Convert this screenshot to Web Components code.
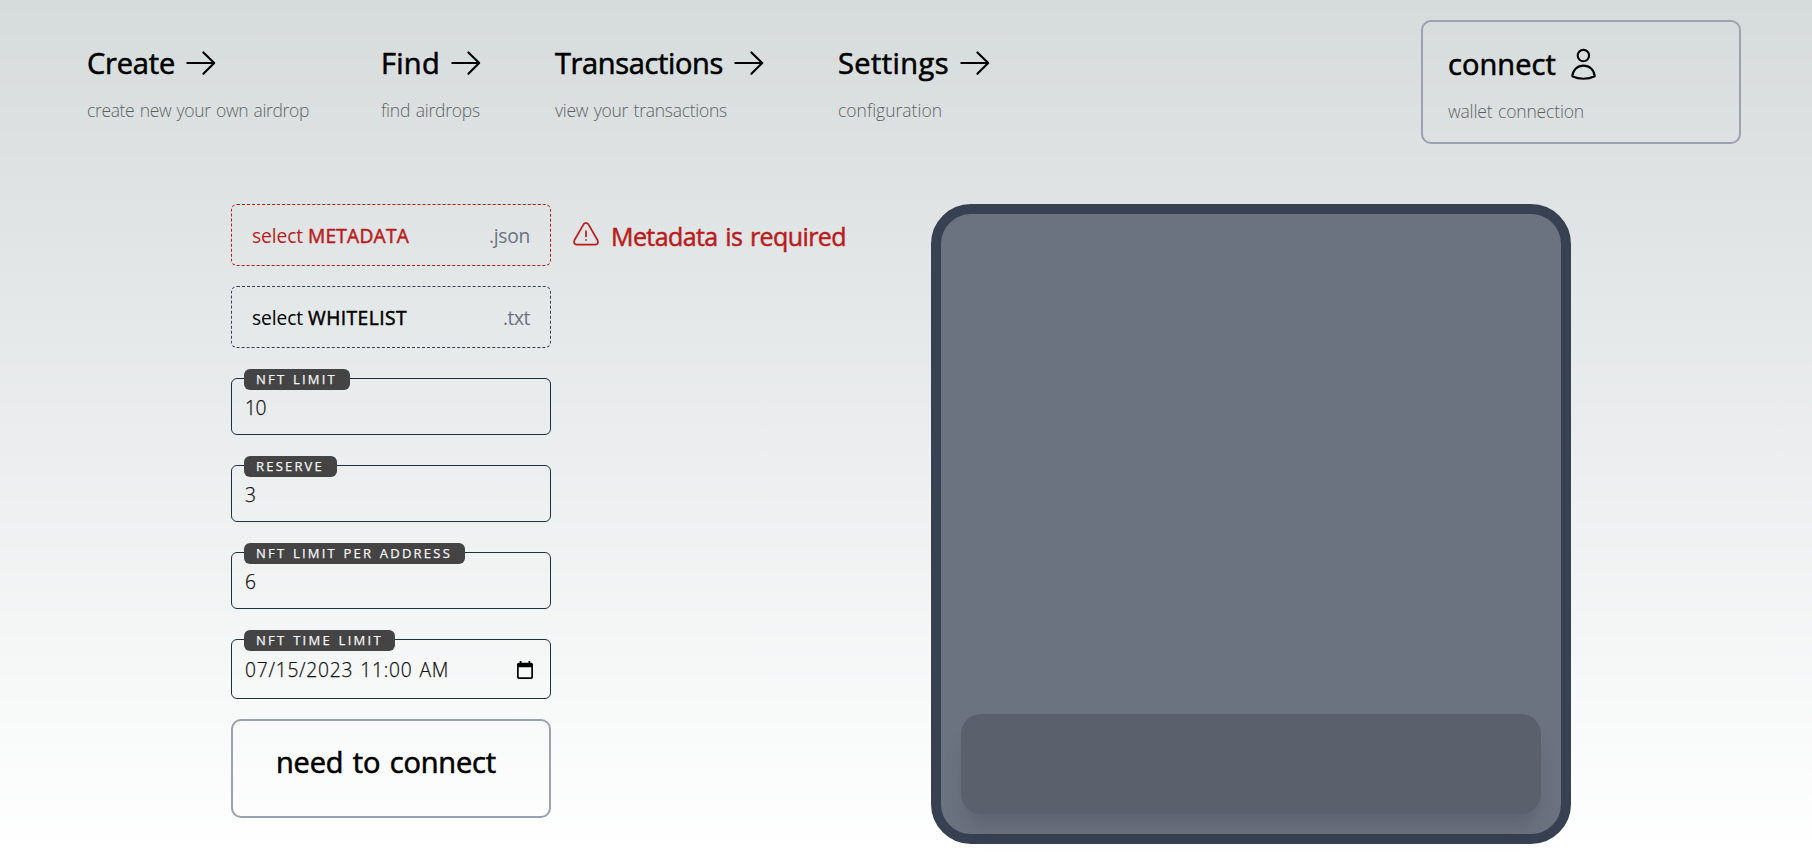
<!DOCTYPE html>
<html lang="en">
<head>
<meta charset="utf-8">
<title>Airdrop</title>
<style>
html,body{margin:0;height:100%;overflow:hidden}
body{background:linear-gradient(rgba(255,255,255,0),#fff) #d6dbdc;font-family:"Open Sans","Noto Sans",sans-serif;color:#000}
</style>
</head>
<body>
<airdrop-page></airdrop-page>
<script>
const define=(name,html,setup)=>customElements.define(name,class extends HTMLElement{
  connectedCallback(){
    if(this.shadowRoot)return;
    this.attachShadow({mode:"open"}).innerHTML=typeof html==="function"?html(this):html;
    if(setup)setup(this);
  }
});

/* Sets one line of text to a given advance width through its tracking. */
define("fit-text",`<style>:host{display:block;white-space:nowrap;width:max-content}span{display:inline-block;word-spacing:.07em}</style><span></span>`,el=>{
  const s=el.shadowRoot.querySelector("span");
  s.textContent=el.getAttribute("text");
  const w=parseFloat(el.getAttribute("w")),n=s.textContent.length;
  s.style.letterSpacing=(w-s.getBoundingClientRect().width)/n+"px";
});

define("arrow-icon",`<style>:host{display:block;width:30px;height:26px}svg{display:block}</style>
<svg width="30" height="26" viewBox="0 0 30 26" fill="none" stroke="#000" stroke-width="2.1" stroke-linecap="round" stroke-linejoin="round"><path d="M1.3 13H28M17.4 2.4 28.2 13 17.4 23.8"/></svg>`);

define("user-icon",`<style>:host{display:block;width:26px;height:32px}svg{display:block}</style>
<svg width="26" height="32" viewBox="0 0 26 32" fill="none" stroke="#000" stroke-width="2.1" stroke-linejoin="round"><circle cx="12.4" cy="7.6" r="5.7"/><path d="M1.3 28.2C1.9 21.800 6.400 17.600 12.500 17.600s10.600 4.200 11.200 10.600C20.300 29.900 16.500 30.700 12.500 30.700S4.700 29.900 1.300 28.200Z"/></svg>`);

define("warning-icon",`<style>:host{display:block;width:26px;height:24px}svg{display:block}</style>
<svg width="26" height="24" viewBox="0 0 26 24" fill="none" stroke="#b91c1c" stroke-width="1.7" stroke-linecap="round" stroke-linejoin="round"><path d="M10.700 2.100Q13 -.4 15.300 2.100L24.600 18.200Q26 22.200 22.200 22.700H3.800Q0 22.200 1.400 18.200Z"/><path d="M13 9.200v5.200M13 17.800v.1"/></svg>`);

define("calendar-icon",`<style>:host{display:block;width:16px;height:18px}svg{display:block}</style>
<svg width="16" height="18" viewBox="0 0 16 18"><path fill="#000" fill-rule="evenodd" d="M2.700 0h1.800v1.800h7V0h1.800v1.800h.9A1.800 1.800 0 0 1 16 3.600V16.200A1.800 1.800 0 0 1 14.200 18H1.800A1.800 1.800 0 0 1 0 16.200V3.600A1.800 1.800 0 0 1 1.800 1.800h.9ZM1.700 6.200V16.300H14.300V6.200Z"/></svg>`);

define("nav-card",el=>`<style>
:host{display:block;box-sizing:border-box}
.row{display:flex;align-items:center;height:40px;gap:${el.getAttribute("gap")||11}px}
.title{font-size:29px;line-height:40px;-webkit-text-stroke:.6px currentColor}
.sub{font-size:17.5px;line-height:24px;font-weight:300;opacity:.58;margin-top:15px}
</style><div class="row"><fit-text class="title" text="${el.getAttribute("name")}" w="${el.getAttribute("w")}"></fit-text><slot></slot></div>
<fit-text class="sub" text="${el.getAttribute("sub")}" w="${el.getAttribute("sw")}"></fit-text>`);

define("file-picker",el=>`<style>
:host{display:flex;box-sizing:border-box;height:62px;border:1px dashed #374151;border-radius:6px;padding:2px 20px 0;align-items:center;font-size:19.2px;line-height:30px;color:#000}
:host([invalid]){border-color:#b91c1c;color:#b91c1c}
.kind{-webkit-text-stroke:.5px currentColor;margin-left:5px}
.ext{margin-left:auto;color:#6b7280}
</style><fit-text text="select" w="51"></fit-text><fit-text class="kind" text="${el.getAttribute("kind")}" w="${el.getAttribute("w")}"></fit-text><fit-text class="ext" text="${el.getAttribute("ext")}" w="${el.getAttribute("ew")}"></fit-text>`);

define("labelled-field",el=>`<style>
:host{display:flex;position:relative;box-sizing:border-box;height:57px;border:1px solid #1f2f40;border-radius:6px;padding:2px 17px 0 13px;align-items:center;justify-content:space-between}
.tag{position:absolute;left:11.500px;top:-10px;height:20.500px;box-sizing:border-box;border-radius:6px;background:#444;color:#f5f5f5;padding-left:12.500px;font-size:13px;line-height:20px;-webkit-text-stroke:.25px currentColor;width:${el.getAttribute("tw")-1}px}
.value{font-size:19.200px;line-height:28px;color:#111;-webkit-text-stroke:.25px currentColor;font-weight:300}
</style><div class="tag"><fit-text text="${el.getAttribute("label")}" w="${el.getAttribute("lw")-1}"></fit-text></div><fit-text class="value" text="${el.getAttribute("value")}" w="${el.getAttribute("vw")}"></fit-text><slot></slot>`);

define("connect-button",`<style>
:host{display:block;box-sizing:border-box;height:99px;border:2px solid #9ba1b0;border-radius:10px;padding:19px 0 0 43px;font-size:29px;line-height:44px;-webkit-text-stroke:.6px currentColor}
</style><fit-text text="need to connect" w="220"></fit-text>`);

define("preview-panel",`<style>
:host{display:flex;box-sizing:border-box;width:640px;height:640px;border:10px solid #374151;border-radius:40px;background:#6b7280;padding:20px;align-items:flex-end}
div{flex:1;height:100px;border-radius:20px;background:#5b616c;box-shadow:0 20px 25px -5px rgba(0,0,0,.1),0 8px 10px -6px rgba(0,0,0,.04)}
</style><div></div>`);

define("airdrop-page",`<style>
:host{display:block;height:852px;overflow:hidden}
header{display:flex;height:204px;padding-left:87px;box-sizing:border-box}
header>nav-card{margin-top:43px;flex:none}
header>.account{margin:20px 0 0 auto;width:320px;height:124px;margin-right:71px;border:2px solid #9ba1b0;border-radius:10px;padding:22px 0 0 25px}
main{display:flex;padding-left:231px}
.form{width:320px;flex:none}
.whitelist{margin-top:20px}
labelled-field{margin-top:30px}
.time{height:60px}
connect-button{margin-top:20px}
.error{display:flex;align-items:flex-start;margin-left:22px;width:358px;flex:none;color:#b91c1c;font-size:25px;line-height:40px;-webkit-text-stroke:.5px currentColor}
.error warning-icon{margin-top:18px}
.error fit-text{margin:12px 0 0 12px}
</style>
<header>
<nav-card name="Create" w="88" sub="create new your own airdrop" sw="222" style="width:294px"><arrow-icon></arrow-icon></nav-card>
<nav-card name="Find" w="59" sub="find airdrops" sw="99" style="width:174px"><arrow-icon></arrow-icon></nav-card>
<nav-card name="Transactions" w="168" sub="view your transactions" sw="172" style="width:283px"><arrow-icon></arrow-icon></nav-card>
<nav-card name="Settings" w="111" sub="configuration" sw="104" style="width:160px"><arrow-icon></arrow-icon></nav-card>
<nav-card class="account" name="connect" w="108" gap="15" sub="wallet connection" sw="136"><user-icon></user-icon></nav-card>
</header>
<main>
<div class="form">
<file-picker invalid kind="METADATA" w="101" ext=".json" ew="41"></file-picker>
<file-picker class="whitelist" kind="WHITELIST" w="99" ext=".txt" ew="27"></file-picker>
<labelled-field label="NFT LIMIT" tw="107" lw="82" value="10" vw="21"></labelled-field>
<labelled-field label="RESERVE" tw="94" lw="69" value="3" vw="11"></labelled-field>
<labelled-field label="NFT LIMIT PER ADDRESS" tw="222" lw="197" value="6" vw="11"></labelled-field>
<labelled-field class="time" label="NFT TIME LIMIT" tw="152" lw="128" value="07/15/2023 11:00 AM" vw="204"><calendar-icon></calendar-icon></labelled-field>
<connect-button></connect-button>
</div>
<div class="error"><warning-icon></warning-icon><fit-text text="Metadata is required" w="235"></fit-text></div>
<preview-panel></preview-panel>
</main>`);
</script>
</body>
</html>
